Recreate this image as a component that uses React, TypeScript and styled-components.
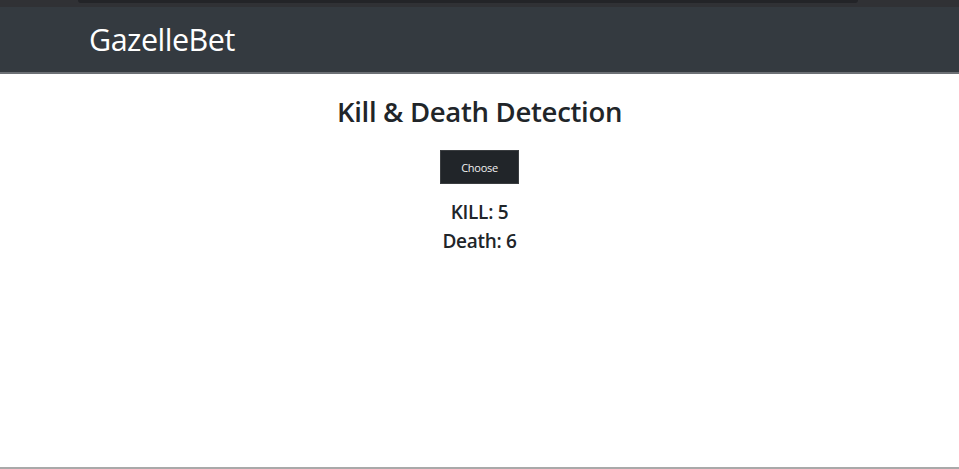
import React from "react";
import styled, { createGlobalStyle } from "styled-components";

const Global = createGlobalStyle`
  html, body { margin: 0; padding: 0; background: #fff; }
  body { font-family: "Open Sans", "Noto Sans", sans-serif; color: #212529; }
`;

const Page = styled.div`
  height: 469px;
  display: flex;
  flex-direction: column;
  overflow: hidden;
`;

const TopStrip = styled.div`
  height: 7px;
  background: #303135;
  display: flex;
  padding: 0 101px 0 78px;
`;

const StripBar = styled.div`
  flex: 1;
  height: 3px;
  background: #232428;
  border-radius: 0 0 6px 6px;
`;

const Navbar = styled.nav`
  height: 63px;
  background: #343a40;
  border-bottom: 2px solid #6c7075;
  display: flex;
  align-items: center;
  padding: 0 0 2px 89px;
`;

const Brand = styled.div`
  color: #fff;
  font-family: "Open Sans", sans-serif;
  font-size: 30.5px;
  letter-spacing: -0.5px;
  font-weight: 400;
`;

const Main = styled.main`
  flex: 1;
  display: flex;
  flex-direction: column;
  align-items: center;
  padding-top: 20px;
`;

const Title = styled.h1`
  margin: 0;
  font-size: 27.5px;
  font-weight: 600;
  letter-spacing: -0.3px;
  line-height: 36px;
`;

const Button = styled.button`
  margin-top: 20px;
  width: 79px;
  height: 34px;
  background: #212529;
  color: #f1f1f1;
  border: 1px solid #3a3d40;
  font-family: "Open Sans", sans-serif;
  font-size: 11px;
  letter-spacing: -0.3px;
  padding: 0;
`;

const Stats = styled.div`
  margin-top: 14px;
  display: flex;
  flex-direction: column;
  align-items: center;
`;

const Stat = styled.div`
  font-size: 19px;
  font-weight: 600;
  line-height: 29px;
  letter-spacing: -0.3px;
`;

const BottomLine = styled.div`
  height: 2px;
  background: #a9a9a9;
`;

export default function App() {
  return (
    <Page>
      <Global />
      <TopStrip>
        <StripBar />
      </TopStrip>
      <Navbar>
        <Brand>GazelleBet</Brand>
      </Navbar>
      <Main>
        <Title>Kill &amp; Death Detection</Title>
        <Button>Choose</Button>
        <Stats>
          <Stat>KILL: 5</Stat>
          <Stat>Death: 6</Stat>
        </Stats>
      </Main>
      <BottomLine />
    </Page>
  );
}
